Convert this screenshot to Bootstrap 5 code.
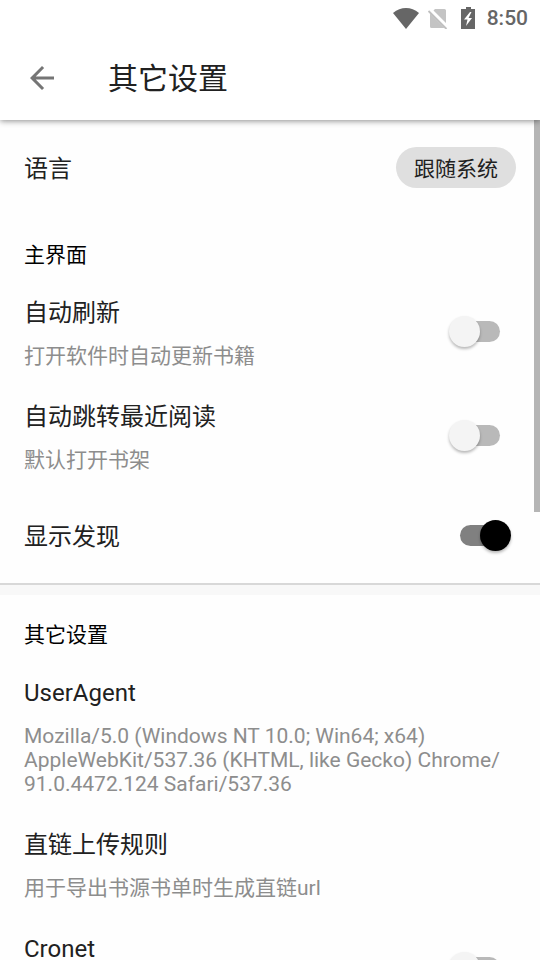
<!DOCTYPE html>
<html lang="zh-CN">
<head>
<meta charset="utf-8">
<meta name="viewport" content="width=device-width, initial-scale=1">
<title>其它设置</title>
<link href="https://cdn.jsdelivr.net/npm/bootstrap@5.3.0/dist/css/bootstrap.min.css" rel="stylesheet">
<style>
  body { font-family: Roboto, "Noto Sans CJK SC", sans-serif; color: #212121; background: #fefefe; }
  .status-bar { height: 36px; padding-right: 12px; color: #666; font-size: 21px; line-height: 38px; }
  .app-bar { height: 84px; padding: 0 24px; }
  .top-area { background: #fff; box-shadow: 0 1px 6px rgba(0, 0, 0, .45); z-index: 2; }
  .app-title { font-size: 30px; line-height: 40px; margin-left: 48px; padding-top: 2px; }
  .back-btn { color: #757575; line-height: 1; }
  .settings { min-height: 0; }
  .scroll-thumb { width: 6px; height: 46.67%; background: #b5b5b5; }
  .pref { padding: 15px 29px 16px 24px; min-height: 96px; }
  .pref-lang { padding-right: 24px; }
  .pref-tall { min-height: 104px; }
  .pref-title { font-size: 24px; line-height: 36px; }
  .pref-single { padding-top: 2px; }
  .pref-note { font-size: 21px; line-height: 24px; margin-top: 13px; color: #8d8d8d; }
  .group-title { font-size: 21px; line-height: 32px; padding: 23px 24px 9px; color: #000; }
  .group-gap { height: 12px; border-top: 2px solid #d8d8d8; background: #f8f8f8; margin: -1px 0 1px; }
  .lang-btn { height: 41px; padding: 3px 18px 0; font-size: 21px; line-height: 38px; background: #dfdfdf; color: #212121; }
  .toggle { appearance: none; display: grid; align-items: center; width: 62px; height: 32px; margin: 0; cursor: pointer; }
  .toggle::before, .toggle::after { content: ""; grid-area: 1 / 1; }
  .toggle::before { height: 21px; margin: 0 11px; border-radius: 11px; background: #b9b9b9; }
  .toggle::after { width: 31px; height: 31px; border-radius: 50%; background: #f4f4f4; box-shadow: 0 2px 3px rgba(0, 0, 0, .28); }
  .toggle:checked::before { background: #808080; }
  .toggle:checked::after { background: #000; justify-self: end; }
</style>
<script src="https://cdn.jsdelivr.net/npm/bootstrap@5.3.0/dist/js/bootstrap.bundle.min.js"></script>
</head>
<body class="vh-100 overflow-hidden d-flex flex-column">
<header class="top-area position-relative flex-shrink-0">
  <div class="status-bar d-flex justify-content-end align-items-center">
    <svg width="26" height="22" viewBox="0 0 26 22" fill="currentColor" aria-hidden="true"><path d="M13 22 0 6Q6 1 13 1T26 6Z"/></svg>
    <svg class="ms-2" width="22" height="22" viewBox="0 0 22 22" aria-hidden="true"><path d="M8 2h9.500q1.500 0 1.500 1.500V16L6.500 3.500ZM3 6.500 17.500 21H4.500Q3 21 3 19.500Z" fill="#c4c4c4"/><path d="M1.500 4 19.500 22" fill="none" stroke="#c0c0c0" stroke-width="1.800"/></svg>
    <svg class="ms-2 me-1" width="22" height="22" viewBox="0 0 22 22" aria-hidden="true"><path d="M9 0h5v2h4v20H4V2h5Z" fill="currentColor"/><path d="M13 5 7 12.500h3.500L9 19l6-8h-3.500L14.500 5Z" fill="#fff"/></svg>
    <span class="fw-medium ms-1">8:50</span>
  </div>
  <div class="app-bar d-flex align-items-center">
    <button type="button" class="back-btn btn border-0 p-0" aria-label="返回">
      <svg width="36" height="36" viewBox="0 0 24 24" fill="currentColor" aria-hidden="true"><path d="M20 11H7.830l5.590-5.590L12 4l-8 8 8 8 1.410-1.410L7.830 13H20z"/></svg>
    </button>
    <h1 class="app-title fw-normal mb-0">其它设置</h1>
  </div>
</header>
<main class="settings position-relative flex-grow-1 overflow-hidden">
  <div class="scroll-thumb position-absolute top-0 end-0"></div>
  <section>
    <div class="pref pref-lang d-flex align-items-center justify-content-between">
      <label class="pref-title pref-single" for="lang">语言</label>
      <button type="button" id="lang" class="lang-btn btn border-0 rounded-pill">跟随系统</button>
    </div>
    <h2 class="group-title fw-normal mb-0">主界面</h2>
    <div class="pref d-flex align-items-center justify-content-between">
      <label for="refresh"><span class="pref-title d-block">自动刷新</span><span class="pref-note d-block">打开软件时自动更新书籍</span></label>
      <input class="toggle flex-shrink-0" type="checkbox" role="switch" id="refresh">
    </div>
    <div class="pref d-flex align-items-center justify-content-between">
      <label for="jump"><span class="pref-title d-block">自动跳转最近阅读</span><span class="pref-note d-block">默认打开书架</span></label>
      <input class="toggle flex-shrink-0" type="checkbox" role="switch" id="jump">
    </div>
    <div class="pref d-flex align-items-center justify-content-between">
      <label class="pref-title pref-single" for="discover">显示发现</label>
      <input class="toggle flex-shrink-0" type="checkbox" role="switch" id="discover" checked>
    </div>
  </section>
  <div class="group-gap"></div>
  <section>
    <h2 class="group-title fw-normal mb-0">其它设置</h2>
    <div class="pref">
      <div class="pref-title">UserAgent</div>
      <div class="pref-note">Mozilla/5.0 (Windows NT 10.0; Win64; x64) AppleWebKit/537.36 (KHTML, like Gecko) Chrome/<wbr>91.0.4472.124 Safari/537.36</div>
    </div>
    <div class="pref">
      <div class="pref-title">直链上传规则</div>
      <div class="pref-note">用于导出书源书单时生成直链url</div>
    </div>
    <div class="pref pref-tall d-flex align-items-center justify-content-between">
      <label class="pref-title align-self-start" for="cronet">Cronet</label>
      <input class="toggle flex-shrink-0" type="checkbox" role="switch" id="cronet">
    </div>
  </section>
</main>
</body>
</html>
